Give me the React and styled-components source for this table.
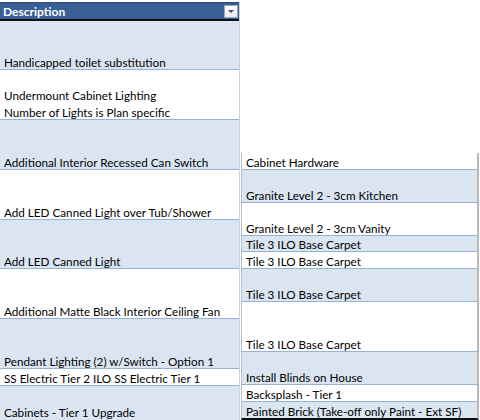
import styled, { createGlobalStyle } from 'styled-components';

const GlobalStyle = createGlobalStyle`
  html, body {
    margin: 0;
    padding: 0;
    background: #ffffff;
  }
  body {
    font-family: Lato, "Liberation Sans", sans-serif;
    font-size: 11.7px;
    color: #000;
  }
`

const Sheet = styled.div`
  display: flex;
  align-items: flex-start;
  width: 480px;
  height: 420px;
  overflow: hidden;
  padding-top: 2px;
  box-sizing: border-box;
`

const LeftColumn = styled.div`
  width: 240px;
  box-sizing: border-box;
  border-right: 1px solid #c9d3e3;
  display: flex;
  flex-direction: column;
`

const RightColumn = styled.div`
  margin-top: 151px;
  margin-left: 1px;
  width: 238px;
  box-sizing: border-box;
  border-left: 1px solid #b4bfd0;
  border-right: 2px solid #b8b8b8;
  border-bottom: 2px solid #111;
  display: flex;
  flex-direction: column;
`

const Header = styled.div`
  height: 19px;
  box-sizing: border-box;
  background: #3a5f95;
  border-top: 1px solid #2c4a78;
  border-bottom: 2px solid #111;
  display: flex;
  align-items: center;
  justify-content: space-between;
  padding: 1px 1px 0 3px;
  color: #fff;
  font-weight: 700;
  font-size: 12px;
`

const FilterButton = styled.div`
  width: 14px;
  height: 13px;
  box-sizing: border-box;
  background: linear-gradient(#ffffff, #e8ebf0);
  border: 1px solid #9aa6b8;
  display: flex;
  align-items: center;
  justify-content: center;

  &::after {
    content: '';
    border-left: 3px solid transparent;
    border-right: 3px solid transparent;
    border-top: 3px solid #4a4a4a;
  }
`

const Cell = styled.div`
  height: ${p => p.$h}px;
  box-sizing: border-box;
  background: ${p => (p.$shaded ? '#dbe5f1' : '#ffffff')};
  border-bottom: ${p => (p.$last ? 'none' : '1px solid #95b3d7')};
  display: flex;
  flex-direction: column;
  justify-content: flex-end;
  padding: 0 0 ${p => p.$pad || 0}px 4px;
  white-space: nowrap;
  overflow: hidden;
`

const Line = styled.div`
  padding-top: 3px;
  line-height: 13.5px;
`

const leftRows = [
  { h: 49, lines: ['Handicapped toilet substitution'] },
  { h: 50, lines: ['Undermount Cabinet Lighting', 'Number of Lights is Plan specific'] },
  { h: 50, lines: ['Additional Interior Recessed Can Switch'] },
  { h: 50, lines: ['Add LED Canned Light over Tub/Shower'] },
  { h: 49, lines: ['Add LED Canned Light'] },
  { h: 50, lines: ['Additional Matte Black Interior Ceiling Fan'] },
  { h: 50, lines: ['Pendant Lighting (2) w/Switch - Option 1'] },
  { h: 17, lines: ['SS Electric Tier 2 ILO SS Electric Tier 1'] },
  { h: 50, lines: ['Cabinets - Tier 1 Upgrade'], pad: 17 },
]

const rightRows = [
  { h: 17, lines: ['Cabinet Hardware'] },
  { h: 33, lines: ['Granite Level 2 - 3cm Kitchen'] },
  { h: 33, lines: ['Granite Level 2 - 3cm Vanity'] },
  { h: 16, lines: ['Tile 3 ILO Base Carpet'] },
  { h: 17, lines: ['Tile 3 ILO Base Carpet'] },
  { h: 33, lines: ['Tile 3 ILO Base Carpet'] },
  { h: 50, lines: ['Tile 3 ILO Base Carpet'] },
  { h: 33, lines: ['Install Blinds on House'] },
  { h: 17, lines: ['Backsplash - Tier 1'] },
  { h: 16, lines: ['Painted Brick (Take-off only Paint - Ext SF)'] },
]

const Rows = ({ rows, startShaded }) =>
  rows.map((row, i) => (
    <Cell
      key={i}
      $h={row.h}
      $pad={row.pad}
      $shaded={(i % 2 === 0) === startShaded}
      $last={i === rows.length - 1}
    >
      {row.lines.map(line => (
        <Line key={line}>{line}</Line>
      ))}
    </Cell>
  ))

const App = () => {
  return (
    <>
      <GlobalStyle />
      <Sheet>
        <LeftColumn>
          <Header>
            Description
            <FilterButton />
          </Header>
          <Rows rows={leftRows} startShaded={true} />
        </LeftColumn>
        <RightColumn>
          <Rows rows={rightRows} startShaded={false} />
        </RightColumn>
      </Sheet>
    </>
  )
}

export default App
